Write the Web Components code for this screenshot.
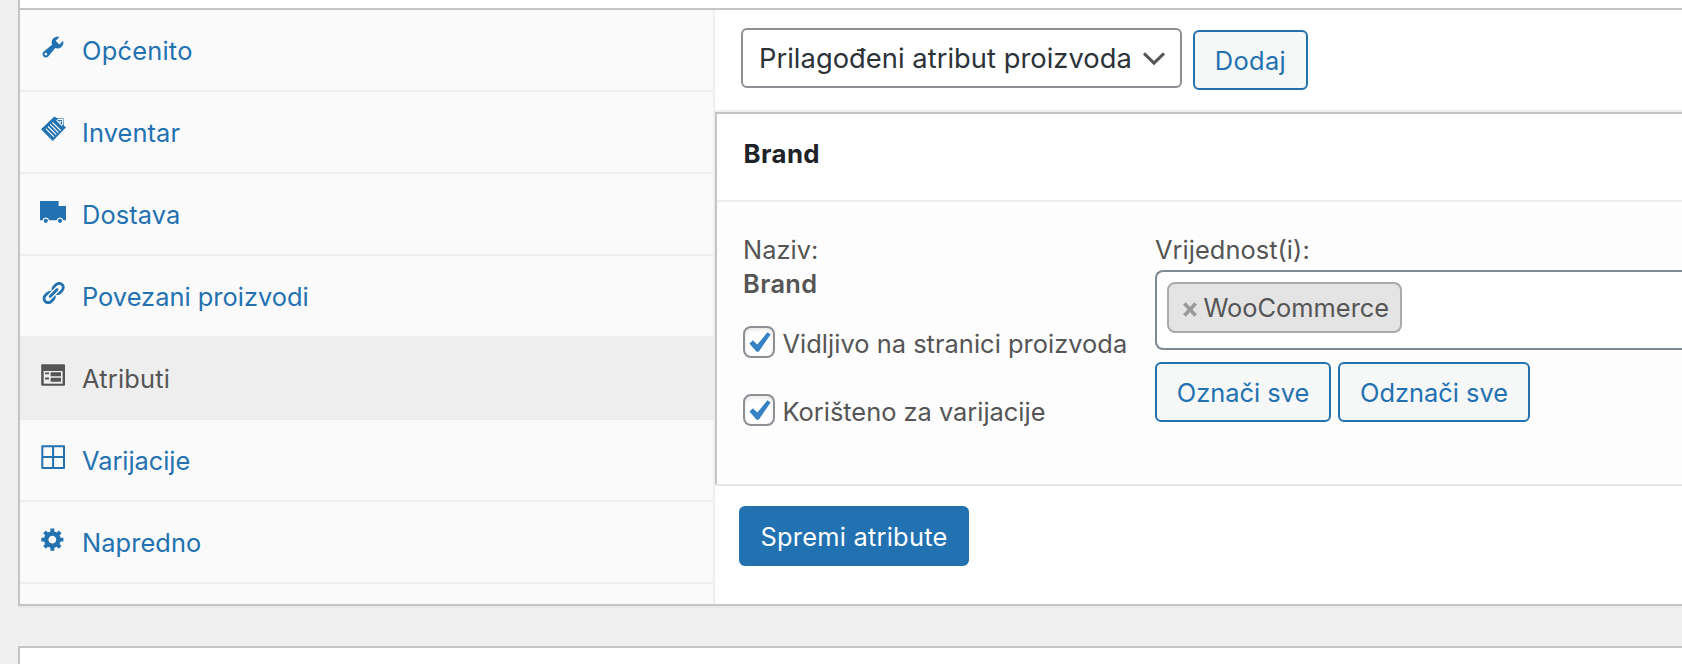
<!DOCTYPE html>
<html lang="hr">
<head>
<meta charset="utf-8">
<title>Podaci o proizvodu</title>
<style>
html,body{margin:0;height:100%;overflow:hidden;background:#f0f0f1}
body{font:25.4px/34px Inter,"Noto Sans",sans-serif;color:#555}
</style>
</head>
<body>
<product-page></product-page>
<script>
const define = (name, html, setup) => {
  const tpl = document.createElement('template');
  tpl.innerHTML = html;
  customElements.define(name, class extends HTMLElement {
    connectedCallback() {
      if (this.shadowRoot) return;
      this.attachShadow({ mode: 'open' }).appendChild(tpl.content.cloneNode(true));
      if (setup) setup(this, this.shadowRoot);
    }
  });
};

const ICONS = {
  wrench: ['0 0 20 20', '<path d="M16.68 9.77c-1.34 1.34-3.3 1.67-4.95.99l-5.41 6.52c-.99.99-2.59.99-3.58 0s-.99-2.59 0-3.57l6.52-5.42c-.68-1.65-.35-3.61.99-4.95 1.28-1.28 3.12-1.62 4.72-1.06l-2.89 2.89 2.82 2.82 2.86-2.87c.53 1.58.18 3.39-1.08 4.65zM3.81 16.21c.4.39 1.04.39 1.43 0 .4-.4.4-1.04 0-1.43-.39-.4-1.03-.4-1.43 0-.39.39-.39 1.03 0 1.43z"/>'],
  tags: ['0 0 26 26', '<path fill-rule="evenodd" d="M14.4 .4 16.6 2 23 2.2Q23.6 2.4 23.7 3.2L23.9 9.6 25.9 11.6 12.7 25 1 13.3Z"/><path fill="none" stroke="#fafafa" stroke-width="1.2" d="M17.5 3.4 22.6 3.4 22.7 8.8M16.6 4.2 22 9.7M12.4 6.3 20.6 14.5M10.2 8.4 18.4 16.6M8 10.5 16.2 18.7M5.8 12.6 14 20.8"/><circle cx="20.4" cy="5.7" r="1" fill="#fafafa"/>'],
  truck: ['0 0 26 26', '<path d="M0 3h18.6v5H26v14.2h-2.6a3.5 3.5 0 0 0-6.8 0H9.2a3.5 3.5 0 0 0-6.8 0H0z"/><circle cx="5.8" cy="22.8" r="2.1"/><circle cx="20" cy="22.8" r="2.1"/>'],
  link: ['0 0 20 20', '<path d="M17.74 2.76c1.68 1.69 1.68 4.41 0 6.1l-1.53 1.52c-1.12 1.12-2.7 1.47-4.14 1.09l2.62-2.61.76-.77.76-.76c.84-.84.84-2.2 0-3.04-.84-.85-2.2-.85-3.04 0l-.77.76-3.38 3.38c-.37-1.44-.02-3.02 1.1-4.14l1.52-1.53c1.69-1.68 4.42-1.68 6.1 0zM8.59 13.43l5.34-5.34c.42-.42.42-1.1 0-1.52-.44-.43-1.13-.39-1.53 0l-5.33 5.34c-.42.42-.42 1.1 0 1.52.44.43 1.13.39 1.52 0zm-.76 2.29l4.14-4.15c.38 1.44.03 3.02-1.09 4.14l-1.52 1.53c-1.69 1.68-4.41 1.68-6.1 0-1.68-1.68-1.68-4.42 0-6.1l1.53-1.52c1.12-1.12 2.7-1.47 4.14-1.1l-4.14 4.15c-.85.84-.85 2.2 0 3.05.84.84 2.2.84 3.04 0z"/>'],
  list: ['0 0 26 26', '<rect x="1.2" y="2.3" width="23.8" height="21.5" rx="1"/><path fill="#eee" d="M3.7 9H22.6V21.7H3.7z"/><path d="M5 10.4h4v1.9H5zM5 15.6h4v1.9H5zM10.6 10.2H21v4H10.6zM10.6 15.7H21v4H10.6z"/>'],
  grid: ['0 0 26 26', '<path fill="none" stroke="currentColor" stroke-width="2" stroke-linejoin="round" d="M2.3 2.3H24V24H2.3zM13.1 2.3V24M2.3 13.1H24"/>'],
  gear: ['0 0 20 20', '<path d="M18 12h-2.18c-.17.7-.44 1.35-.81 1.93l1.54 1.54-2.1 2.1-1.54-1.54c-.58.36-1.23.63-1.91.79V19H8v-2.18c-.68-.16-1.33-.43-1.91-.79l-1.54 1.54-2.12-2.12 1.54-1.54c-.36-.58-.63-1.23-.79-1.91H1V9.03h2.17c.16-.7.44-1.35.8-1.94L2.43 5.55l2.1-2.1 1.54 1.54c.58-.37 1.24-.64 1.93-.81V2h3v2.18c.68.16 1.33.43 1.91.79l1.54-1.54 2.12 2.12-1.54 1.54c.36.59.64 1.24.8 1.94H18V12zm-8.5 1.5c1.66 0 3-1.34 3-3s-1.34-3-3-3-3 1.34-3 3 1.34 3 3 3z"/>'],
};

define('ui-icon', `<style>:host{display:block;width:26px;height:26px;flex:none}svg{display:block;fill:currentColor;overflow:visible}</style><svg width="26" height="26"></svg>`,
  (el, root) => {
    const [box, body] = ICONS[el.getAttribute('name')];
    const svg = root.querySelector('svg');
    svg.setAttribute('viewBox', box);
    svg.innerHTML = body;
  });

define('data-tab', `<style>
:host{display:flex;box-sizing:border-box;height:82px;padding-left:20px;border-bottom:2px solid #eee;color:#2271b1;background:#fafafa}
:host([active]){background:#eee;color:#555}
ui-icon{margin-top:24px}
span{margin-left:16px;line-height:82px;height:80px;white-space:nowrap}
</style><span><slot></slot></span>`,
  (el, root) => {
    const icon = document.createElement('ui-icon');
    icon.setAttribute('name', el.getAttribute('icon'));
    root.insertBefore(icon, root.querySelector('span'));
  });

define('data-tabs', `<style>
:host{display:block;box-sizing:border-box;width:695px;flex:none;background:#fafafa;border-right:2px solid #eee}
</style>
<data-tab icon="wrench" style="letter-spacing:.24px">Općenito</data-tab>
<data-tab icon="tags" style="letter-spacing:.1px">Inventar</data-tab>
<data-tab icon="truck" style="letter-spacing:.1px">Dostava</data-tab>
<data-tab icon="link" style="letter-spacing:.02px">Povezani proizvodi</data-tab>
<data-tab icon="list" style="letter-spacing:.2px" active>Atributi</data-tab>
<data-tab icon="grid" style="letter-spacing:-.04px">Varijacije</data-tab>
<data-tab icon="gear" style="letter-spacing:.1px">Napredno</data-tab>`);

define('ui-button', `<style>
:host{display:block;flex:none}
button{display:block;box-sizing:border-box;width:100%;height:60px;margin:0;padding:0;border:2px solid #2271b1;border-radius:6px;background:#f6f7f7;color:#2271b1;font:inherit;letter-spacing:inherit;line-height:57px;text-align:center;white-space:nowrap}
:host([primary]) button{background:#2271b1;color:#fff}
</style><button type="button"><slot></slot></button>`);

define('ui-select', `<style>
:host{display:flex;box-sizing:border-box;width:441px;height:60px;border:2px solid #8c8f94;border-radius:6px;background:#fff;color:#2c3338;padding-left:16px;font-size:27.3px;letter-spacing:.04px;line-height:58px;white-space:nowrap;flex:none}
svg{margin:21px 0 0 auto;padding-right:14px}
</style><slot></slot><svg width="24" height="16" viewBox="0 0 24 16" fill="none" stroke="#555" stroke-width="3.1"><path d="M2 2.4 12 12 22 2.4"/></svg>`);

define('ui-checkbox', `<style>
:host{display:flex;height:32px;white-space:nowrap}
i{box-sizing:border-box;width:32px;height:32px;border:2px solid #8c8f94;border-radius:8px;background:#fff;box-shadow:inset 0 2px 4px rgba(0,0,0,.1);flex:none}
svg{display:block;width:28px;height:28px}
span{margin-left:7.5px;line-height:36px}
</style><i><svg viewBox="0 0 28 28"><path fill="#3582c4" d="M22.4 4.3 25.6 6.5 14.1 23.2Q12.7 24.2 11.1 23.2L4.4 15.6 7.9 12.3 12.3 16.6Z"/></svg></i><span><slot></slot></span>`);

define('value-field', `<style>
:host{display:flex;box-sizing:border-box;height:80px;border:2px solid #7e8993;border-right:0;border-radius:8px 0 0 8px;background:#fff;padding:10px 0 0 10px}
div{display:flex;box-sizing:border-box;width:235px;height:51px;border:2px solid #aaa;border-radius:8px;background:#e4e4e4;padding-left:14px;color:#555;line-height:48px;white-space:nowrap}
svg{flex:none;margin:17.5px 6.4px 0 0}
</style><div><svg width="14" height="15" viewBox="0 0 14 15" stroke="#999" stroke-width="3.6"><path d="M1.4 1.6 12.6 13.4M12.6 1.6 1.4 13.4"/></svg><slot></slot></div>`);

define('attribute-box', `<style>
:host{display:block;box-sizing:border-box;height:372px;border:2px solid #c3c4c7;border-width:2px 0 0 2px;background:#fdfdfd;color:#555}
h3{margin:0;height:86px;border-bottom:2px solid #eee;background:#fff;color:#1d2327;font-size:25.8px;font-weight:650;line-height:80px;padding-left:26.5px;letter-spacing:.4px}
.body{display:flex;padding:31px 0 0 26px}
.left{width:412px;flex:none}
.right{flex:1}
p,strong{display:block;margin:0;height:34px}
p{letter-spacing:.05px}
strong{font-weight:600;letter-spacing:.4px}
ui-checkbox{margin:25px 0 0}
ui-checkbox + ui-checkbox{margin-top:36px}
.right p{height:37px}
.buttons{display:flex;gap:7px;margin-top:12px}
</style>
<h3>Brand</h3>
<div class="body">
<div class="left"><p>Naziv:</p><strong>Brand</strong>
<ui-checkbox style="letter-spacing:.04px">Vidljivo na stranici proizvoda</ui-checkbox>
<ui-checkbox>Korišteno za varijacije</ui-checkbox></div>
<div class="right"><p>Vrijednost(i):</p>
<value-field>WooCommerce</value-field>
<div class="buttons"><ui-button style="width:176px">Označi sve</ui-button><ui-button style="width:192px">Odznači sve</ui-button></div></div>
</div>`);

define('attributes-panel', `<style>
:host{display:block;flex:1;background:#fff}
.bar{display:flex;box-sizing:border-box;height:102px;padding:18px 0 0 26px;border-bottom:2px solid #eee}
.bar ui-button{width:115px;margin:2px 0 0 11px;letter-spacing:.35px}
.foot{border-top:2px solid #e5e5e5;padding:20px 0 0 24px}
.foot ui-button{width:230px;letter-spacing:.24px}
</style>
<div class="bar"><ui-select>Prilagođeni atribut proizvoda</ui-select><ui-button>Dodaj</ui-button></div>
<attribute-box></attribute-box>
<div class="foot"><ui-button primary>Spremi atribute</ui-button></div>`);

define('product-page', `<style>
:host{display:block;height:100%;padding-left:18px;overflow:hidden}
.panel{border:2px solid #c3c4c7;border-width:0 0 2px 2px;background:#fff;box-shadow:0 2px 2px rgba(0,0,0,.04)}
.head{height:8px;border-bottom:2px solid #c3c4c7}
.wrap{display:flex;height:594px}
.next{margin-top:40px;height:40px;border-width:2px 0 0 2px}
</style>
<div class="panel"><div class="head"></div><div class="wrap"><data-tabs></data-tabs><attributes-panel></attributes-panel></div></div>
<div class="panel next"></div>`);
</script>
</body>
</html>
